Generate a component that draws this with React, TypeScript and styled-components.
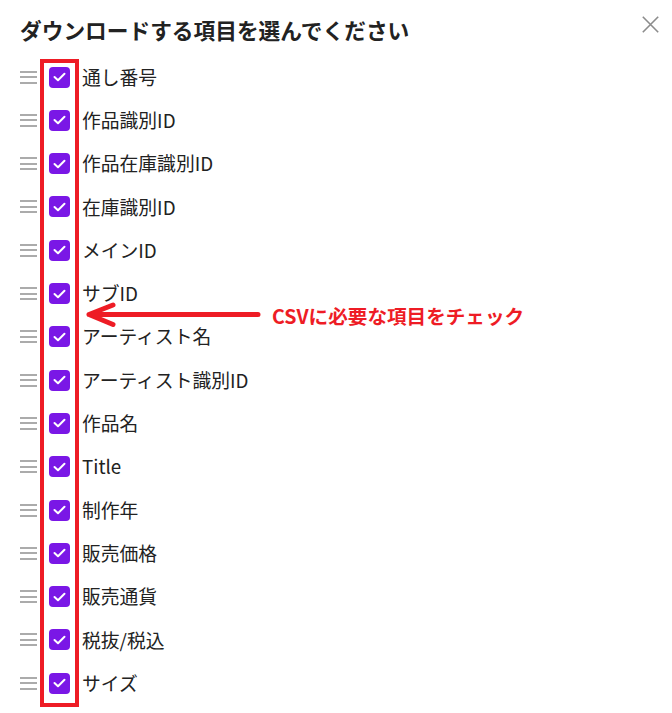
import React from "react";
import styled, { createGlobalStyle } from "styled-components";

const GlobalStyle = createGlobalStyle`
  html, body {
    margin: 0;
    padding: 0;
    background: #ffffff;
  }
  body {
    font-family: "Noto Sans CJK JP", "Noto Sans", sans-serif;
    color: #222222;
  }
`;

const Panel = styled.div`
  position: relative;
  width: 672px;
  height: 713px;
  padding: 0 20px;
  box-sizing: border-box;
  overflow: hidden;
  background: #fff;
`;

const Header = styled.div`
  display: flex;
  align-items: flex-start;
  justify-content: space-between;
  padding-top: 18px;
  height: 24px;
`;

const Title = styled.h2`
  margin: 0;
  font-size: 21.7px;
  line-height: 24px;
  font-weight: 700;
  color: #222;
`;

const CloseButton = styled.button`
  border: none;
  background: none;
  padding: 0;
  width: 17px;
  height: 17px;
  margin-right: -7px;
  margin-top: -2px;
  cursor: pointer;
  display: flex;
  align-items: center;
  justify-content: center;
`;

const List = styled.ul`
  list-style: none;
  margin: 13.4px 0 0;
  padding: 0;
`;

const Row = styled.li`
  display: flex;
  align-items: center;
  height: 43.3px;
`;

const Handle = styled.span`
  display: flex;
  flex-direction: column;
  justify-content: space-between;
  width: 17px;
  height: 13px;
  margin-right: 12px;

  span {
    display: block;
    height: 2px;
    background: #ababab;
  }
`;

const Box = styled.span<{ $checked: boolean }>`
  display: flex;
  align-items: center;
  justify-content: center;
  width: 21px;
  height: 21px;
  border-radius: 4px;
  background: ${(p) => (p.$checked ? "#7a17e6" : "#fff")};
  border: ${(p) => (p.$checked ? "none" : "2px solid #999")};
  box-sizing: border-box;
  margin-right: 12px;
`;

const Label = styled.span`
  font-size: 18.8px;
  line-height: 1;
  color: #222;
`;

const Frame = styled.div`
  position: absolute;
  left: 40px;
  top: 59px;
  width: 39px;
  height: 648px;
  box-sizing: border-box;
  border: 4.5px solid #ee1c25;
  pointer-events: none;
`;

const Arrow = styled.svg`
  position: absolute;
  left: 82px;
  top: 300px;
`;

const Note = styled.div`
  position: absolute;
  left: 272px;
  top: 303px;
  font-size: 19.6px;
  line-height: 26px;
  font-weight: 700;
  color: #ee1c25;
`;

const items = [
  "通し番号",
  "作品識別ID",
  "作品在庫識別ID",
  "在庫識別ID",
  "メインID",
  "サブID",
  "アーティスト名",
  "アーティスト識別ID",
  "作品名",
  "Title",
  "制作年",
  "販売価格",
  "販売通貨",
  "税抜/税込",
  "サイズ",
];

function Check() {
  return (
    <svg width="13" height="10" viewBox="0 0 13 10">
      <path
        d="M1.5 5 L5 8.3 L11.5 1.8"
        fill="none"
        stroke="#fff"
        strokeWidth="2"
        strokeLinecap="round"
        strokeLinejoin="round"
      />
    </svg>
  );
}

export default function App() {
  return (
    <>
      <GlobalStyle />
      <Panel>
        <Header>
          <Title>ダウンロードする項目を選んでください</Title>
          <CloseButton aria-label="閉じる">
            <svg width="17" height="17" viewBox="0 0 17 17">
              <path
                d="M0.8 0.8 L16.2 16.2 M16.2 0.8 L0.8 16.2"
                stroke="#8c8c8c"
                strokeWidth="1.6"
                fill="none"
              />
            </svg>
          </CloseButton>
        </Header>

        <List>
          {items.map((label) => (
            <Row key={label}>
              <Handle>
                <span />
                <span />
                <span />
              </Handle>
              <Box $checked>
                <Check />
              </Box>
              <Label>{label}</Label>
            </Row>
          ))}
        </List>

        <Frame />
        <Arrow width="182" height="32" viewBox="0 0 182 32">
          <path
            d="M7 14.5 H176 M31 5 L7 14.5 L31 24.5"
            fill="none"
            stroke="#ee1c25"
            strokeWidth="5"
            strokeLinecap="round"
            strokeLinejoin="round"
          />
        </Arrow>
        <Note>CSVに必要な項目をチェック</Note>
      </Panel>
    </>
  );
}
